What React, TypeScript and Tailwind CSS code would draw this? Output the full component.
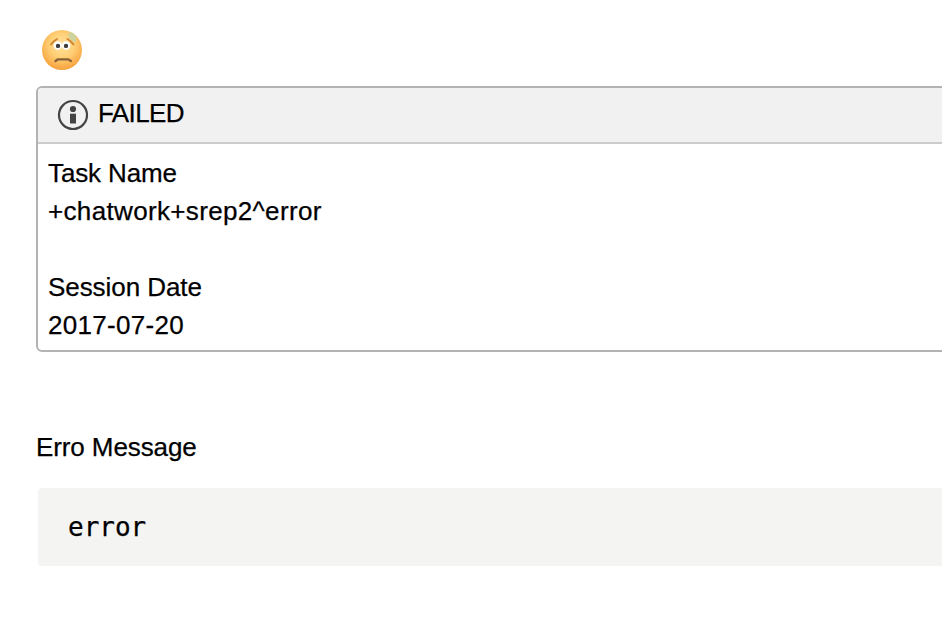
export default function App() {
  return <main className="h-[634px] w-[942px] overflow-hidden bg-white pl-9 pt-[28px] font-['Liberation_Sans',Arial,sans-serif] text-[26px] leading-[38px] text-black [-webkit-text-stroke:0.25px_black]">
    <svg className="ml-[5px] block" width="42" height="43" viewBox="0 0 42 43">
      <defs>
        <radialGradient id="face" cx=".5" cy=".38" r=".62"><stop offset="0" stopColor="#ffe2a0"/><stop offset=".5" stopColor="#ffcf75"/><stop offset="1" stopColor="#f7a13c"/></radialGradient>
      </defs>
      <circle cx="21" cy="22" r="20" fill="url(#face)"/>
      <path d="M27 6Q29 3 32 5Q37 9 35 13Q33 15 30 12Q28 10 27 6Z" fill="#c5d3a8" opacity=".85"/>
      <circle cx="16.7" cy="17.5" r="4.2" fill="#fff"/><circle cx="25.2" cy="17.5" r="4.2" fill="#fff"/>
      <circle cx="17" cy="17.9" r="2.2" fill="#3d3d3d"/><circle cx="25" cy="17.9" r="2.2" fill="#3d3d3d"/>
      <path d="M10 16.5Q12 13.5 16 11M26.5 11Q30.5 13.5 32.5 16.5" fill="none" stroke="#d08732" strokeWidth="2" strokeLinecap="round"/>
      <path d="M14.5 33L17 31.3H27L30 33" fill="none" stroke="#866038" strokeWidth="2.3" strokeLinecap="round" strokeLinejoin="round"/>
    </svg>
    <section className="mt-[15px] h-[266px] w-[940px] rounded-[6px] border-2 border-[#b3b3b3]">
      <header className="flex h-[56px] items-center rounded-t-[4px] border-b-2 border-[#cccccc] bg-[#f1f1f1] pl-[19px]">
        <svg className="-mt-px" width="32" height="32" viewBox="0 0 32 32"><circle cx="16" cy="16" r="14" fill="none" stroke="#444" strokeWidth="2.2"/><circle cx="16" cy="10" r="3.1" fill="#444"/><path d="M13 14.7h6v9.8h-6z" fill="#444"/></svg>
        <h1 className="ml-[9px] -mt-1 tracking-[-0.6px]">FAILED</h1>
      </header>
      <div className="pl-[10px] pt-[10px]"><p className="tracking-[-0.12px]">Task Name</p><p className="tracking-[0.34px]">+chatwork+srep2^error</p><p className="mt-[38px] tracking-[-0.06px]">Session Date</p><p className="tracking-[0.3px]">2017-07-20</p></div>
    </section>
    <p className="mt-[76px] tracking-[-0.1px]">Erro Message</p>
    <pre className="ml-[2px] mt-[22px] h-[78px] w-[940px] rounded-[4px] bg-[#f4f4f2] pl-[30px] pt-5 font-['DejaVu_Sans_Mono',monospace] text-[26px] leading-[38px]">error</pre>
  </main>;
}
